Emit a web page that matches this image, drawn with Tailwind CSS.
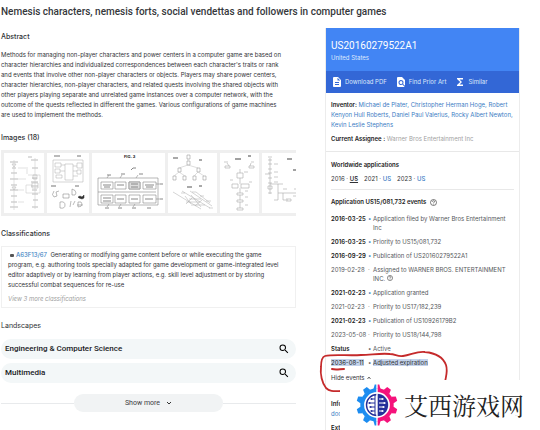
<!DOCTYPE html>
<html lang="en">
<head>
<meta charset="utf-8">
<meta name="viewport" content="width=device-width, initial-scale=1">
<title>US20160279522A1</title>
<script src="https://cdn.jsdelivr.net/npm/@tailwindcss/browser@4"></script>
</head>
<body class="bg-white font-[Inter,Roboto,sans-serif] text-[6px] leading-[10px] text-[#303236]">
<div class="relative h-screen overflow-hidden">
<h1 class="px-px pt-1.5 font-[Roboto,sans-serif] text-[10px] leading-3 font-medium text-[#35373b]">Nemesis characters, nemesis forts, social vendettas and followers in computer games</h1>
<div class="mt-2.5 flex items-start gap-[29px] pr-5">
  <main class="min-w-0 flex-1 pl-px">
    <section class="pt-[3px]">
      <h2 class="text-[7px] leading-3 font-medium">Abstract</h2>
      <p class="mt-[7px]">Methods for managing non-player characters and power centers in a computer game are based on<br>character hierarchies and individualized correspondences between each character's traits or rank<br>and events that involve other non-player characters or objects. Players may share power centers,<br>character hierarchies, non-player characters, and related quests involving the shared objects with<br>other players playing separate and unrelated game instances over a computer network, with the<br>outcome of the quests reflected in different the games. Various configurations of game machines<br>are used to implement the methods.</p>
    </section>
    <section class="mt-3">
      <h2 class="text-[7px] leading-3 font-medium">Images (18)</h2>
      <div class="mt-1.5 flex gap-[3px] overflow-hidden bg-[#efefef] p-[3px]">
        <svg class="h-[60px] w-10 shrink-0 bg-white" viewBox="0 0 40 60" fill="none" stroke="#bbb" stroke-width=".6">
          <path d="M24 4h4M6 9h8M27 7h7M8 15h4M28 15h6M7 20h6M6 26h8M7 32h6M6 37h8M7 43h6M7 49h6M6 54h8M28 25h5M27 29h7M27 33h7M28 37h5M28 41h6M29 47h5M28 54h6" stroke-width="1.2"/>
          <path d="M10 7v50M31 5v51M14 15h8M14 26h8M14 37h6M14 49h6M23 14v7M24 22h12v18H22v-8h6" stroke="#ccc"/>
          <path d="M8 11h4l-2 3zM8 34h4l-2 3zM29 22h4v4h-4zM28 30h6v5h-6z"/>
        </svg>
        <svg class="h-[60px] w-[42px] shrink-0 bg-white" viewBox="0 0 42 60" fill="none" stroke="#aaa" stroke-width=".5">
          <path d="M7 3h6M30 3h4M4 33h5M28 33h4" stroke="#777" stroke-width="1.200"/>
          <path d="M6 7h30v22H6zM18 11h8v16h-8zM8 10h6v4H8zM8 16h5v4H8zM9 22h6v3H9zM14 12h4M13 18h5M26 13h4M26 18h4M30 10h5v5h-5zM30 17h4v4h-4zM26 23h5"/>
          <path d="M7 38q-3 4 0 6l3-1-1-4 3-1M25 36v6q4 1 4-2t-4-4M16 41h6v4h-6zM13 49v6q5 1 5-3t-5-3M24 48l-1 6M28 48l-2 4M31 49v5q4 0 4-3t-4-2M30 52h6" stroke="#777"/>
          <path d="m31 44 2-1 2 1 2-2v3l-2 1-3-1z" fill="#333" stroke="#333"/>
        </svg>
        <svg class="h-[60px] w-[73px] shrink-0 bg-white" viewBox="0 0 73 60" fill="none" stroke="#888" stroke-width=".6">
          <text x="32" y="5" font-size="4" font-weight="700" fill="#222" stroke="none">FIG. 3</text>
          <path d="M6 25h60v27H6zM9 29h12v7H9zM23 29h11v7H23zM37 29h11v7H37zM51 29h13v7H51zM9 42h12v8H9zM23 42h11v8H23zM37 42h11v8H37zM51 42h13v8H51zM6 39h58"/>
          <path d="M37 29h11v7H37z" fill="#ddd"/>
          <path d="M11 32h8M12 34h6M25 32h7M39 31h7M39 34h7M53 32h9M54 34h7M11 45h8M11 48h8M25 46h7M39 46h7M53 46h8M15 22h4M29 21h4M47 21h4M39 17l2-2h3M13 55h4M26 55h4M40 55h4M55 55h4M68 31h3M68 46h3" stroke-width="1"/>
          <path d="m15 25 2-3M28 25l2-3M44 25l2-3M15 54l2-3M27 54l2-3M41 54l2-3M64 31h4M64 46h4"/>
        </svg>
        <svg class="h-[60px] w-[49px] shrink-0 bg-white" viewBox="0 0 49 60" fill="none" stroke="#bbb" stroke-width=".5">
          <path d="M5 5h5M19 34h5M31 7h3M31 33h3" stroke="#555" stroke-width="1.200"/>
          <path d="M19 2h3v4h-3zM19 8h3v4h-3zM10 15h3v4h-3zM29 15h3v4h-3zM5 23h3v4H5zM15 23h3v4h-3zM25 23h3v4h-3zM35 23h3v4h-3z" stroke="#888"/>
          <path d="M20 6v2M20 12l-9 3M20 12l10 3M11 19l-5 4M11 19l6 4M30 19l-4 4M30 19l6 4"/>
          <path d="m14 38 28 17M22 38l22 15M28 39l14 11M5 39l28 17M18 49h14M21 46h12M23 52h14M17 43l6 8M23 42l10 12M18 51l6-6M27 53l7-6M13 40h4M24 39h4M32 43h4M38 48h5M41 55h4" stroke="#aaa"/>
        </svg>
        <svg class="h-[60px] w-[39px] shrink-0 bg-white" viewBox="0 0 39 60" fill="none" stroke="#aaa" stroke-width=".6">
          <path d="M15 6h6M28 3h3" stroke="#444" stroke-width="1.200"/>
          <path d="M4 9h4M31 9h3M5 13h5v2H5zM29 13h5v2h-5zM17 20h6v5h-6zM12 31h6v4h-6zM21 31h8v4h-8zM17 40h6v2h-6zM17 47h6v2h-6zM17 55h6v2h-6zM20 16v4M20 25v6M20 35v5M20 42v5M20 49v6M24 19h4M10 27h3M29 29h3M25 38h3M25 44h3M25 52h3M7 10l2 3M31 10l-1 3"/>
        </svg>
        <svg class="h-[60px] w-12 shrink-0 bg-white" viewBox="0 0 48 60" fill="none" stroke="#aaa" stroke-width=".6">
          <path d="M25 6h5M31 17h3" stroke="#444" stroke-width="1.200"/>
          <path d="M8 5v36M6 4h4M6 7h4M6 11h4M6 16h4M6 20h4M6 25h4M6 30h4M6 40h4M12 11h4M12 19h4M12 24h4M12 29h4M3 21h5M6 33h4v3H6zM8 31h8v16h-4M16 40h18M16 31h5M21 40v7h5M24 46h5v2h-5M21 36h4M32 36h4M31 43h4"/>
        </svg>
      </div>
    </section>
    <section class="mt-3">
      <h2 class="text-[7px] leading-3 font-medium">Classifications</h2>
      <div class="mt-1.5 border border-[#f0f0f0] px-1.5 py-[3px]">
        <p class="pl-[2px]"><span class="mr-[2px] inline-block h-[3px] w-1 rounded-[1px] bg-[#555] align-middle"></span><a href="#" class="font-medium text-[#4285c4]">A63F13/67</a> &nbsp;Generating or modifying game content before or while executing the game</p>
        <p>program, e.g. authoring tools specially adapted for game development or game-integrated level<br>editor adaptively or by learning from player actions, e.g. skill level adjustment or by storing<br>successful combat sequences for re-use</p>
        <a href="#" class="mt-1 block text-[#a0a0a0] italic">View 3 more classifications</a>
      </div>
    </section>
    <section class="mt-3">
      <h2 class="text-[7px] leading-3">Landscapes</h2>
      <div class="mt-[7px] flex flex-col gap-1 font-[Roboto,sans-serif] text-[8px] font-medium text-[#202124]">
        <button type="button" class="flex h-5 items-center justify-between rounded-full bg-[#f3f7f8] pr-1.5 pl-1">Engineering &amp; Computer Science
          <svg class="h-3 w-3" viewBox="0 0 24 24"><path d="M15.5 14h-.79l-.28-.27A6.47 6.47 0 0 0 16 9.500 6.500 6.500 0 1 0 9.500 16c1.610 0 3.090-.59 4.230-1.570l.27.28v.79l5 4.990L20.490 19l-4.990-5zm-6 0a4.500 4.500 0 1 1 0-9 4.500 4.500 0 0 1 0 9z"/></svg>
        </button>
        <button type="button" class="flex h-5 items-center justify-between rounded-full bg-[#f3f7f8] pr-1.5 pl-1">Multimedia
          <svg class="h-3 w-3" viewBox="0 0 24 24"><path d="M15.5 14h-.79l-.28-.27A6.47 6.47 0 0 0 16 9.500 6.500 6.500 0 1 0 9.500 16c1.610 0 3.090-.59 4.230-1.570l.27.28v.79l5 4.990L20.490 19l-4.990-5zm-6 0a4.500 4.500 0 1 1 0-9 4.500 4.500 0 0 1 0 9z"/></svg>
        </button>
      </div>
      <div class="mt-[11px] flex items-center">
        <span class="h-px flex-1 bg-[#e8eaec]"></span>
        <button type="button" class="flex h-[18px] w-[149px] items-center justify-center gap-1.5 rounded-full bg-[#f1f3f4] font-[Roboto,sans-serif] text-[7px] text-[#3c4043]">Show more
          <svg class="h-1.5 w-1.5" viewBox="0 0 6 6" fill="none" stroke="#333"><path d="m1 2 2 2 2-2"/></svg>
        </button>
        <span class="h-px flex-1 bg-[#e8eaec]"></span>
      </div>
    </section>
  </main>

  <aside class="w-[195px] shrink-0 border-x border-[#ececec]">
    <header class="bg-[#4285f4] px-[5px] pt-3 pb-2 text-[#dfe9fd]">
      <h2 class="font-[Roboto,sans-serif] text-[10px] leading-3 text-white">US20160279522A1</h2>
      <p class="leading-[11px]">United States</p>
    </header>
    <nav class="flex h-[22px] items-center gap-2 bg-[#3367d6] px-[5px] text-[#dfe7fa]">
      <a href="#" class="flex items-center gap-[2px]"><svg class="h-3 w-3" viewBox="0 0 24 24" fill="#fff"><path d="M14 2H6a2 2 0 0 0-2 2v16c0 1.100.9 2 2 2h12a2 2 0 0 0 2-2V8zm2 16H8v-2h8zm0-4H8v-2h8zm-3-5V3.500L18.500 9z"/></svg>Download PDF</a>
      <a href="#" class="flex items-center gap-[2px]"><svg class="h-3 w-3" viewBox="0 0 24 24" fill="#fff"><path d="M20 19.590V8l-6-6H6a2 2 0 0 0-2 2v16a2 2 0 0 0 2 2h12c.45 0 .85-.15 1.190-.4l-4.430-4.430A5 5 0 1 1 17 13c0 1.020-.31 1.960-.83 2.750zM9 13a3 3 0 1 0 6 0 3 3 0 0 0-6 0z"/></svg>Find Prior Art</a>
      <a href="#" class="flex items-center gap-[2px]"><svg class="h-3 w-3" viewBox="0 0 24 24" fill="#fff"><path d="M18 4H6v2l6.500 6L6 18v2h12v-3h-7l5-5-5-5h7z"/></svg>Similar</a>
    </nav>
    <div class="border-b border-[#e8e8e8] px-[5px] py-[7px]">
      <p class="text-[#3b7cc4]"><b class="font-semibold text-[#222]">Inventor:</b> Michael de Plater, Christopher Herman Hoge, Robert<br>Kenyon Hull Roberts, Daniel Paul Valerius, Rocky Albert Newton,<br>Kevin Leslie Stephens</p>
      <p class="mt-1 text-[#a2a2a2]"><b class="font-semibold text-[#222]">Current Assignee :</b> Warner Bros Entertainment Inc</p>
    </div>
    <div class="px-[5px]">
      <section class="border-b border-[#e8e8e8] pt-2 pb-[5px]">
        <h3 class="font-semibold text-[#222]">Worldwide applications</h3>
        <p class="mt-1 flex gap-1.5"><span>2016 · <a href="#" class="font-semibold underline">US</a></span><span>2021 · <a href="#" class="font-medium text-[#3b7cc4]">US</a></span><span>2023 · <a href="#" class="font-medium text-[#3b7cc4]">US</a></span></p>
      </section>
      <section class="pt-[7px]">
        <h3 class="flex items-center gap-1 font-semibold text-[#222]">Application US15/081,732 events
          <svg class="h-[7px] w-[7px]" viewBox="0 0 14 14" fill="none" stroke="#444" stroke-width="1.400"><circle cx="7" cy="7" r="6"/><path d="M5 5.500c0-3 4-2.500 4-.3C9 6.700 7 6.700 7 8.500M7 9.700v1.300"/></svg>
        </h3>
        <dl class="mt-[7px] grid grid-cols-[37px_5px_1fr] gap-y-[5px] leading-[9px] text-[#55575b]">
          <dt class="font-semibold text-[#222]">2016-03-25</dt><dd class="text-[#3d7fb8]">•</dd><dd>Application filed by Warner Bros Entertainment<br>Inc</dd>
          <dt class="font-semibold text-[#222]">2016-03-25</dt><dd class="text-[#3d7fb8]">•</dd><dd>Priority to US15/081,732</dd>
          <dt class="font-semibold text-[#222]">2016-09-29</dt><dd class="text-[#3d7fb8]">•</dd><dd>Publication of US20160279522A1</dd>
          <dt>2019-02-28</dt><dd>·</dd><dd>Assigned to WARNER BROS. ENTERTAINMENT<br>INC. <svg class="inline h-[6px] w-[6px] align-baseline" viewBox="0 0 14 14" fill="none" stroke="#444" stroke-width="1.400"><circle cx="7" cy="7" r="6"/><path d="M5 5.500c0-3 4-2.500 4-.3C9 6.700 7 6.700 7 8.500M7 9.700v1.300"/></svg></dd>
          <dt class="font-semibold text-[#222]">2021-02-23</dt><dd class="text-[#3d7fb8]">•</dd><dd>Application granted</dd>
          <dt>2021-02-23</dt><dd>·</dd><dd>Priority to US17/182,239</dd>
          <dt class="font-semibold text-[#222]">2021-02-23</dt><dd class="text-[#3d7fb8]">•</dd><dd>Publication of US10926179B2</dd>
          <dt>2023-05-08</dt><dd>·</dd><dd>Priority to US18/144,798</dd>
          <dt class="font-semibold text-[#222]">Status</dt><dd>•</dd><dd>Active</dd>
          <dt class="text-[#222]"><mark class="bg-[#c3d3ec] text-inherit">2036-08-11</mark></dt><dd>•</dd><dd class="text-[#333]"><mark class="bg-[#c3d3ec] text-inherit">Adjusted expiration</mark></dd>
        </dl>
        <button type="button" class="mt-1.5 flex items-center gap-[2px]">Hide events <svg class="h-1 w-1" viewBox="0 0 4 4" fill="none" stroke="#444" stroke-width=".8"><path d="m.5 3 1.500-2 1.500 2"/></svg></button>
      </section>
      <section class="mt-4">
        <h3 class="font-semibold text-[#222]">Info</h3>
        <a href="#" class="block text-[#3b7cc4]">docs</a>
        <h3 class="mt-1 font-semibold text-[#222]">Ext</h3>
      </section>
    </div>
  </aside>
</div>

<svg class="absolute top-[345px] right-[85px] h-[50px] w-[140px]" viewBox="315 345 140 50" fill="none" stroke="#c52a2b" stroke-width="1.800" stroke-linecap="round" aria-hidden="true">
  <path d="M342 391c-7 0-12 1-16-3-4-5-6-14-5-21 0-6 1-10 4-11 8-2 24 0 36-1 10 0 19-2 29-1 5 0 8 3 13 2 8-1 14-5 22-4 10 1 18 5 21 13 2 6 0 11-1 17"/>
  <path d="M332 369c4 1 8 0 12 0" stroke-width="2"/>
</svg>

<div class="absolute top-[380px] right-0 flex h-[50px] w-[200px] items-center gap-1.5 bg-white pl-4">
  <svg class="h-[42px] w-[42px] shrink-0" viewBox="-21 -21 42 42" aria-hidden="true">
    <defs>
      <clipPath id="left"><path d="M-21-21h20.300v42H-21z"/></clipPath>
      <clipPath id="right"><path d="M.7-21H21v42H.7z"/></clipPath>
      <g id="gear">
        <circle r="14.800" fill="none" stroke="currentColor" stroke-width="3.800"/>
        <path id="tooth" fill="currentColor" d="M-3.500-16-2.300-20.500h4.600L3.500-16z"/>
        <use href="#tooth" transform="rotate(36)"/><use href="#tooth" transform="rotate(72)"/><use href="#tooth" transform="rotate(108)"/><use href="#tooth" transform="rotate(144)"/><use href="#tooth" transform="rotate(180)"/><use href="#tooth" transform="rotate(216)"/><use href="#tooth" transform="rotate(252)"/><use href="#tooth" transform="rotate(288)"/><use href="#tooth" transform="rotate(324)"/>
      </g>
    </defs>
    <g clip-path="url(#left)" color="#1c8cf0">
      <use href="#gear"/>
      <circle r="10.500" fill="#fff" stroke="#25309a" stroke-width="1.400"/>
      <path d="M-2-10v20M-2-6h-3M-2-2h-5M-2 2h-4M-2 6h-3" stroke="#25309a" stroke-width="1" fill="none"/>
      <g fill="#25309a"><circle cx="-5.500" cy="-6" r="1.100"/><circle cx="-7.500" cy="-2" r="1.100"/><circle cx="-6.500" cy="2" r="1.100"/><circle cx="-5.500" cy="6" r="1.100"/></g>
    </g>
    <g clip-path="url(#right)" color="#f5127b">
      <use href="#gear"/>
      <circle r="11.200" fill="#25309a"/>
      <path d="M2-6h3M2-2h5M2 2h4M2 6h3" stroke="#fff" stroke-width="1" fill="none"/>
      <g fill="#fff"><circle cx="5.500" cy="-6" r="1.100"/><circle cx="7.500" cy="-2" r="1.100"/><circle cx="6.500" cy="2" r="1.100"/><circle cx="5.500" cy="6" r="1.100"/></g>
    </g>
  </svg>
  <p lang="zh-CN" class="font-['Noto_Serif_CJK_SC','Noto_Sans_CJK_SC',serif] text-[24px] leading-8 whitespace-nowrap text-[#222]">艾西游戏网</p>
</div>
</div>
</body>
</html>
